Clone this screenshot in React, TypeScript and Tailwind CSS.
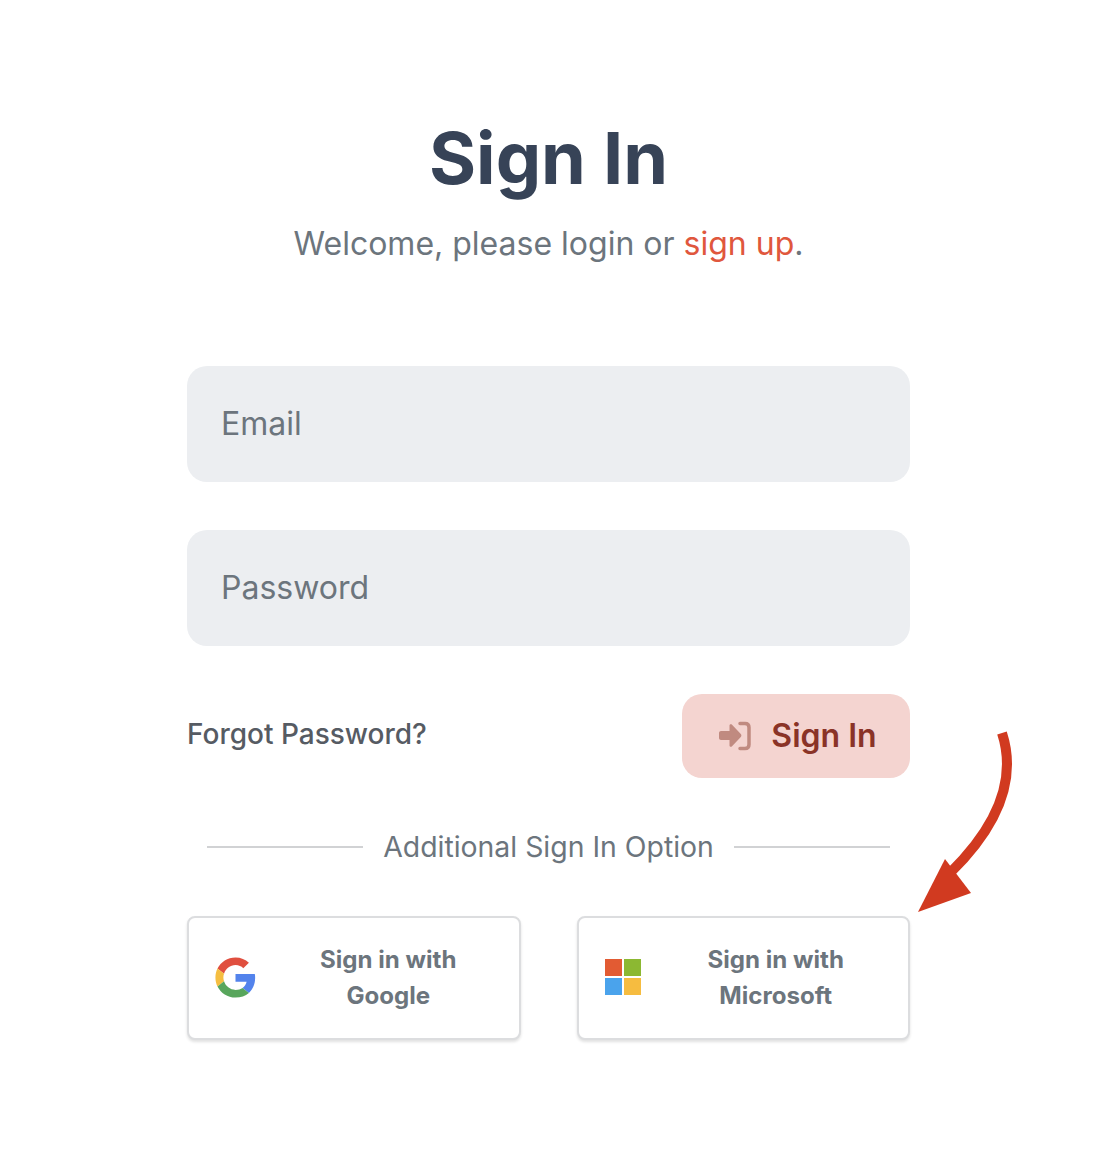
import React from "react";

function GoogleIcon() {
  return (
    <svg className="w-[41px] h-[41px] shrink-0 -mt-[2px]" viewBox="0 0 48 48">
      <path fill="#E04F3F" d="M24 9.500c3.900 0 6.900 1.600 9.100 3.600l6.600-6.500C35.600 2.800 30.300 .5 24 .5 14.700 .5 6.800 5.800 2.900 13.500l7.700 6C12.400 13.800 17.700 9.500 24 9.500z" />
      <path fill="#5383EC" d="M47 24.500c0-1.600-.1-3.100-.4-4.500H24v9h13c-.6 3-2.300 5.500-4.800 7.200l7.500 5.800C44.100 37.900 47 31.800 47 24.500z" />
      <path fill="#F5BE41" d="M10.600 28.500c-.5-1.400-.8-2.900-.8-4.500s.3-3.100.8-4.500l-7.700-6C1.400 16.600 .5 20.200 .5 24s.9 7.400 2.400 10.500l7.700-6z" />
      <path fill="#58A65C" d="M24 47.500c6.300 0 11.600-2.100 15.700-5.500l-7.500-5.800c-2.100 1.400-4.800 2.300-8.200 2.300-6.300 0-11.600-4.300-13.400-10l-7.700 6C6.800 42.200 14.700 47.500 24 47.500z" />
    </svg>
  );
}

function MicrosoftIcon() {
  return (
    <div className="grid grid-cols-[17px_17px] grid-rows-[17px_17px] gap-[2px] shrink-0 -mt-[2px]">
      <div className="bg-[#E25B33]" />
      <div className="bg-[#8CB832]" />
      <div className="bg-[#4AA3EC]" />
      <div className="bg-[#F6BC40]" />
    </div>
  );
}

function SocialButton({ icon, name, iconBox }: { icon: React.ReactNode; name: string; iconBox: string }) {
  return (
    <button className="flex-1 h-[124px] bg-white border-2 border-[#dcdddf] rounded-lg shadow-[0_2px_3px_rgba(0,0,0,0.12)] flex items-center pl-[26px] pr-[7px]">
      <div className={`flex items-center ${iconBox}`}>{icon}</div>
      <span className="text-[24.1px] leading-[36px] font-bold text-[#6C757D] text-center flex-1">
        Sign in with
        <br />
        {name}
      </span>
    </button>
  );
}

export default function App() {
  return (
    <div className="relative bg-white w-full h-[1172px] overflow-hidden pt-[116px] font-['Inter',sans-serif]">
      <main className="w-[723px] ml-[187px]">
        <h1 className="text-center text-[72px] leading-[84px] font-bold text-[#374357]">Sign In</h1>
        <p className="mt-[2px] text-center text-[32px] leading-[84px] text-[#6C757D] h-[84px]">
          Welcome, please login or <span className="text-[#E0573D]">sign up</span>.
        </p>

        <div className="mt-[80px] flex flex-col gap-[48px]">
          <input
            placeholder="Email"
            className="h-[116px] rounded-[20px] bg-[#ECEEF1] px-[34px] pb-[2px] text-[32px] placeholder:text-[#6C757D] outline-none"
          />
          <input
            placeholder="Password"
            className="h-[116px] rounded-[20px] bg-[#ECEEF1] px-[34px] pb-[2px] text-[32px] placeholder:text-[#6C757D] outline-none"
          />
        </div>

        <div className="mt-[48px] flex items-center justify-between">
          <a className="text-[28px] font-medium text-[#565B63] -mt-[4px]" href="#">
            Forgot Password?
          </a>
          <button className="w-[228px] h-[84px] rounded-[20px] bg-[#F4D4D0] flex items-center justify-center gap-[20px] text-[32px] font-semibold text-[#8A3327]">
            <svg className="w-[34px] h-[34px] ml-[2px]" viewBox="0 0 34 34" fill="#C08A80">
              <path d="M4 12H12.500V6.500c0-1.200 1.400-1.800 2.300-1l9 9.600c.8.800.8 2 0 2.800l-9 9.600c-.9.800-2.300.2-2.300-1V21H4C2.900 21 2 20.100 2 19v-5c0-1.100.9-2 2-2z" />
              <path d="M23 4.500h5c2.500 0 4 1.500 4 4v17c0 2.500-1.500 4-4 4h-5" fill="none" stroke="#C08A80" strokeWidth="3.500" strokeLinecap="round" />
            </svg>
            <span>Sign In</span>
          </button>
        </div>

        <div className="mt-[47px] px-[20px] flex items-center h-[44px]">
          <div className="flex-1 h-[2px] bg-[#D1D2D4]" />
          <span className="px-[20.5px] text-[28.4px] text-[#6C757D]">Additional Sign In Option</span>
          <div className="flex-1 h-[2px] bg-[#D1D2D4]" />
        </div>

        <div className="mt-[47px] flex gap-[56px]">
          <SocialButton icon={<GoogleIcon />} name="Google" iconBox="w-[50px]" />
          <SocialButton icon={<MicrosoftIcon />} name="Microsoft" iconBox="w-[46px]" />
        </div>
      </main>

      {/* Annotation arrow */}
      <svg className="absolute left-[910px] top-[725px] w-[110px] h-[195px]" viewBox="0 0 110 195">
        <path d="M92 8C104 45 97 92 40 148" fill="none" stroke="#D13A20" strokeWidth="10" />
        <path d="M8 187L35 134L61 168Z" fill="#D13A20" />
      </svg>
    </div>
  );
}
